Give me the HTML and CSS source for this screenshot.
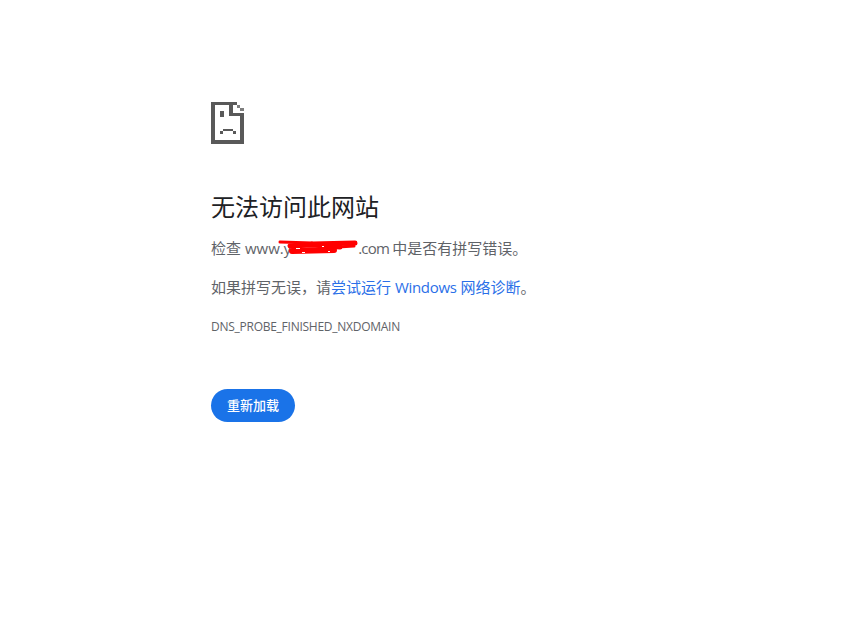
FILE: index.html
```html
<!DOCTYPE html>
<html lang="zh-CN">
<head>
<meta charset="utf-8">
<title>无法访问此网站</title>
<link rel="stylesheet" href="styles.css">
</head>
<body>
<main class="page">
  <svg class="icon" width="33" height="42" viewBox="0 0 33 42" aria-hidden="true">
    <g fill="#595959">
      <rect x="0" y="0" width="4" height="42"/>
      <rect x="0" y="0" width="26" height="3"/>
      <rect x="0" y="38" width="33" height="4"/>
      <rect x="29" y="13" width="4" height="29"/>
      <rect x="18" y="3" width="4" height="11"/>
      <rect x="18" y="11" width="15" height="3"/>
      <rect x="26" y="3" width="3" height="3" fill="#7d7d7d"/>
      <rect x="29" y="6" width="4" height="3" fill="#7d7d7d"/>
      <rect x="9" y="9" width="4" height="6"/>
      <rect x="12" y="27" width="10" height="2"/>
      <rect x="9" y="29" width="3" height="3"/>
      <rect x="22" y="29" width="3" height="3"/>
    </g>
  </svg>
  <h1 class="title">无法访问此网站</h1>
  <p class="line first">检查 <span class="masked">www.y<span class="gap"></span><svg class="scribble" width="82" height="16" viewBox="0 0 82 16" aria-hidden="true"><g fill="none" stroke="#f00" stroke-linecap="round" stroke-linejoin="round"><path d="M2 2 L34 3" stroke-width="3"/><path d="M34 4 L77 3" stroke-width="5"/><path d="M12 6 L34 5 L62 7" stroke-width="5"/><path d="M14 11 L56 10" stroke-width="6"/><path d="M60 7 L76 6" stroke-width="3"/></g><path d="M18 8h4v1h-4zM24 12h3v1h-3zM44 6h2v1h-2zM50 11h2v1h-2z" fill="#fff"/></svg></span><span class="tld">.com </span>中是否有拼写错误。</p>
  <p class="line second">如果拼写无误，请<a class="link" href="#">尝试运行 <span class="latin">Windows</span> 网络诊断</a>。</p>
  <p class="code">DNS_PROBE_FINISHED_NXDOMAIN</p>
  <button class="reload" type="button">重新加载</button>
</main>
</body>
</html>
```
FILE: styles.css
```css
html, body {
  margin: 0;
  padding: 0;
  background: #fff;
}
body {
  font-family: "Open Sans", "Noto Sans CJK SC", sans-serif;
  color: #5f6368;
}
.page {
  display: flex;
  flex-direction: column;
  align-items: flex-start;
  padding: 102px 0 0 211px;
}
.icon {
  display: block;
}
.title {
  margin: 48px 0 0;
  font-size: 24px;
  font-weight: 400;
  line-height: 30px;
  color: #202124;
}
.line {
  margin: 0;
  font-size: 15px;
  line-height: 20px;
}
.first {
  margin-top: 16px;
}
.second {
  margin-top: 19px;
}
.masked {
  position: relative;
}
.gap {
  display: inline-block;
  width: 67px;
}
.scribble {
  position: absolute;
  left: 33px;
  top: 2px;
}
.tld {
  letter-spacing: -0.8px;
}
.link {
  color: #2a6fe8;
  text-decoration: none;
}
.latin {
  letter-spacing: -0.3px;
}
.code {
  margin: 22px 0 0;
  font-size: 12px;
  line-height: 16px;
  letter-spacing: -0.26px;
  color: #5f6368;
}
.reload {
  margin: 54px 0 0;
  width: 84px;
  height: 33px;
  padding: 0 0 2px;
  border: 0;
  border-radius: 17px;
  background: #1a73e8;
  color: #fff;
  font-family: inherit;
  font-size: 13px;
  font-weight: 500;
}
```
